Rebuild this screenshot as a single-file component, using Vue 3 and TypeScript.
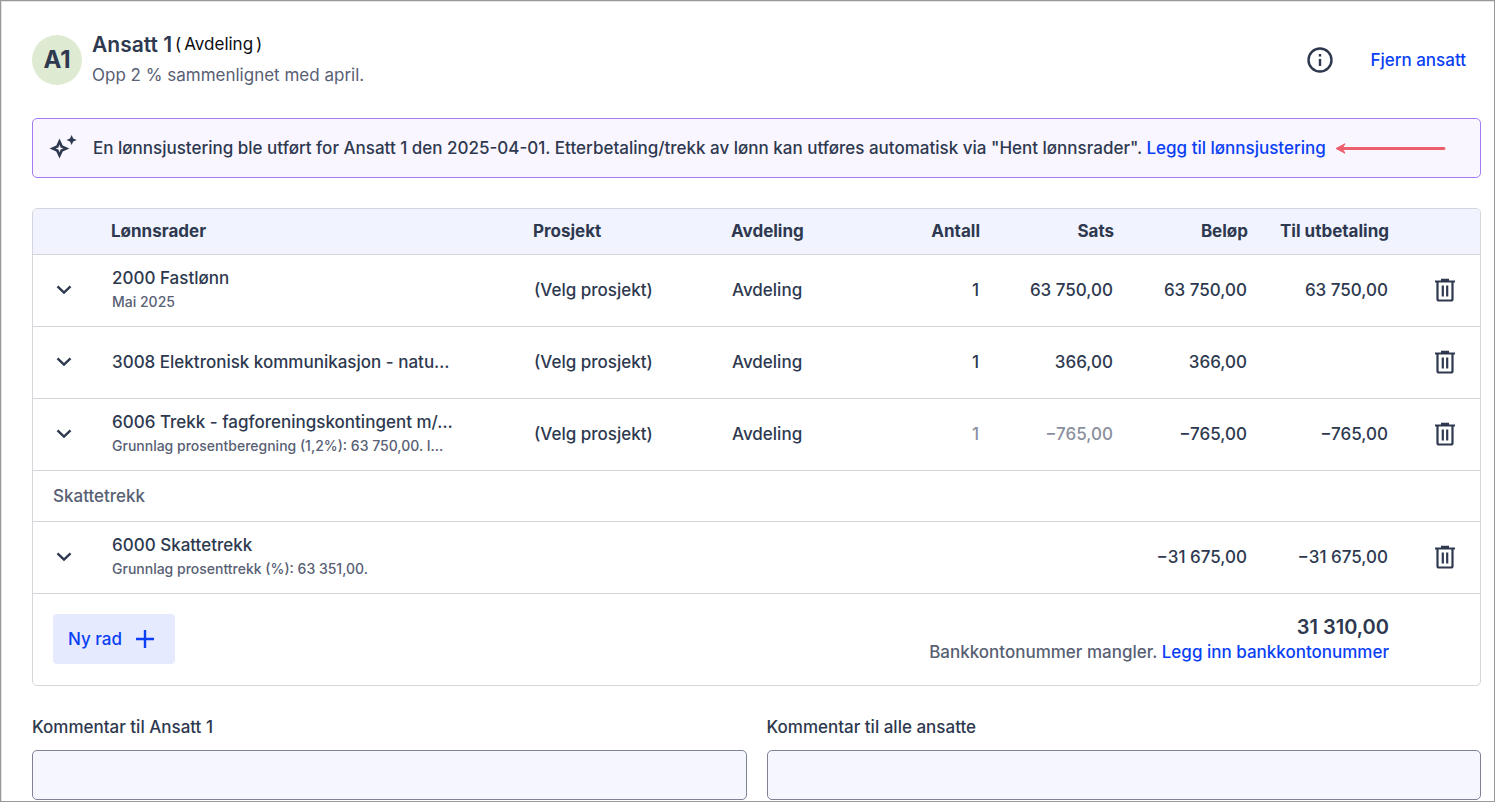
<script setup lang="ts">
import { ref } from 'vue'

interface PayRow {
  id: number
  title: string
  note?: string
  project?: string
  department?: string
  count?: string
  rate?: string
  amount: string
  payout: string
  locked?: boolean
}

const rows: PayRow[] = [
  { id: 1, title: '2000 Fastlønn', note: 'Mai 2025', project: '(Velg prosjekt)', department: 'Avdeling', count: '1', rate: '63 750,00', amount: '63 750,00', payout: '63 750,00' },
  { id: 2, title: '3008 Elektronisk kommunikasjon - natu…', project: '(Velg prosjekt)', department: 'Avdeling', count: '1', rate: '366,00', amount: '366,00', payout: '' },
  { id: 3, title: '6006 Trekk - fagforeningskontingent m/…', note: 'Grunnlag prosentberegning (1,2%): 63 750,00. I…', project: '(Velg prosjekt)', department: 'Avdeling', count: '1', rate: '−765,00', amount: '−765,00', payout: '−765,00', locked: true },
]
const taxRows: PayRow[] = [
  { id: 4, title: '6000 Skattetrekk', note: 'Grunnlag prosenttrekk (%): 63 351,00.', amount: '−31 675,00', payout: '−31 675,00' },
]
const groups = [
  { label: '', rows },
  { label: 'Skattetrekk', rows: taxRows },
]
const employeeComment = ref('')
const sharedComment = ref('')
</script>

<template>
  <main class="page">
    <header class="head">
      <div class="avatar">A1</div>
      <div class="who">
        <div class="who-line"><h1>Ansatt 1</h1><span class="dept"><span>(</span><span>Avdeling</span><span>)</span></span></div>
        <p class="trend">Opp 2 % sammenlignet med april.</p>
      </div>
      <button class="icon-btn" type="button" aria-label="Informasjon">
        <svg width="28" height="28" viewBox="0 0 28 28" fill="none">
          <circle cx="14" cy="14" r="11.5" stroke="currentColor" stroke-width="2.4" />
          <path d="M14 13v7M14 8v2.400" stroke="currentColor" stroke-width="2.4" />
        </svg>
      </button>
      <a class="remove" href="#">Fjern ansatt</a>
    </header>

    <section class="banner">
      <svg class="spark" width="28" height="28" viewBox="0 0 28 28" aria-hidden="true">
        <path fill="currentColor" fill-rule="evenodd" d="M10.500 4.500 13.700 11.400 20.400 14.500 13.700 17.600 10.500 24.500 7.300 17.600 0.600 14.500 7.300 11.400ZM10.500 10.500 9.400 13.400 6.600 14.500 9.400 15.600 10.500 18.500 11.600 15.600 14.400 14.500 11.600 13.400Z" />
        <path fill="currentColor" d="m22.600 0.900 1.600 3.500 3.500 1.600-3.500 1.600-1.600 3.500-1.600-3.500-3.500-1.600 3.500-1.600Z" />
      </svg>
      <p>En lønnsjustering ble utført for Ansatt 1 den 2025-04-01. Etterbetaling/trekk av lønn kan utføres automatisk via "Hent lønnsrader". <a href="#">Legg til lønnsjustering</a></p>
      <svg class="arrow" width="112" height="12" viewBox="0 0 112 12" fill="none" aria-hidden="true">
        <path d="M5 6.500h105" stroke="currentColor" stroke-width="2.800" stroke-linecap="round" />
        <path d="M11 1.800 2 6.500l9 4.700L8 6.500Z" fill="currentColor" stroke="currentColor" stroke-linejoin="round" />
      </svg>
    </section>

    <section class="card">
      <table>
        <colgroup>
          <col class="c-toggle" /><col class="c-title" /><col class="c-project" /><col class="c-dept" />
          <col class="c-count" /><col class="c-rate" /><col class="c-amount" /><col class="c-payout" /><col class="c-del" />
        </colgroup>
        <thead>
          <tr>
            <td></td>
            <th scope="col">Lønnsrader</th>
            <th scope="col">Prosjekt</th>
            <th scope="col">Avdeling</th>
            <th scope="col" class="num">Antall</th>
            <th scope="col" class="num">Sats</th>
            <th scope="col" class="num">Beløp</th>
            <th scope="col" class="num">Til utbetaling</th>
            <td></td>
          </tr>
        </thead>
        <tbody v-for="group in groups" :key="group.label">
          <tr v-if="group.label" class="group">
            <th scope="rowgroup" colspan="9">{{ group.label }}</th>
          </tr>
          <tr v-for="row in group.rows" :key="row.id" class="row">
            <td class="toggle">
              <button class="icon-btn" type="button" :aria-label="'Vis ' + row.title">
                <svg width="16" height="10" viewBox="0 0 16 10" fill="none">
                  <path d="m1.500 1.300 6.500 6.300 6.500-6.300" stroke="currentColor" stroke-width="2.400" />
                </svg>
              </button>
            </td>
            <td>
              <div class="title">{{ row.title }}</div>
              <div v-if="row.note" class="note">{{ row.note }}</div>
            </td>
            <td>{{ row.project }}</td>
            <td>{{ row.department }}</td>
            <td class="num" :class="{ locked: row.locked }">{{ row.count }}</td>
            <td class="num" :class="{ locked: row.locked }">{{ row.rate }}</td>
            <td class="num">{{ row.amount }}</td>
            <td class="num">{{ row.payout }}</td>
            <td class="del">
              <button class="icon-btn" type="button" :aria-label="'Slett ' + row.title">
                <svg width="20" height="24" viewBox="0 0 20 24" fill="none">
                  <path d="M0 3.500h20M6 1.800h8" stroke="currentColor" stroke-width="2.200" />
                  <path d="M2.500 3v18q0 1.500 1.500 1.500h12q1.500 0 1.500-1.500V3M7.800 7.500v11M12.200 7.500v11" stroke="currentColor" stroke-width="2.200" />
                </svg>
              </button>
            </td>
          </tr>
        </tbody>
      </table>
      <footer class="foot">
        <button class="add" type="button">
          Ny rad
          <svg width="20" height="20" viewBox="0 0 20 20" fill="none" aria-hidden="true">
            <path d="M10 1v18M1 10h18" stroke="currentColor" stroke-width="2.400" />
          </svg>
        </button>
        <div class="sum">
          <strong>31 310,00</strong>
          <p>Bankkontonummer mangler. <a href="#">Legg inn bankkontonummer</a></p>
        </div>
      </footer>
    </section>

    <form class="comments" @submit.prevent>
      <div class="field">
        <label for="c1">Kommentar til Ansatt 1</label>
        <input id="c1" v-model="employeeComment" type="text" />
      </div>
      <div class="field">
        <label for="c2">Kommentar til alle ansatte</label>
        <input id="c2" v-model="sharedComment" type="text" />
      </div>
    </form>
  </main>
</template>

<style>
body { margin: 0; background: #fff; }
</style>

<style scoped>
.page {
  box-sizing: border-box;
  min-height: 100vh;
  padding: 34px 13px 0 31px;
  border: 1px solid #999;
  box-shadow: inset 1px 1px #e4e4e4;
  color: #2e394f;
  font: 500 17px/24px Inter, Roboto, sans-serif;
}
h1, p { margin: 0; }
a { color: #0a3ff5; text-decoration: none; }
.icon-btn {
  display: inline-flex;
  padding: 0;
  border: 0;
  background: none;
  color: inherit;
}
.head { display: flex; align-items: center; height: 50px; padding-right: 15px; }
.avatar {
  display: grid;
  place-items: center;
  width: 50px;
  height: 50px;
  margin-right: 10px;
  border-radius: 50%;
  background: #deebd2;
  font-size: 24px;
  font-weight: 700;
}
.who { flex: 1; }
.who-line { display: flex; align-items: flex-start; gap: 3px; height: 30px; }
h1 { font-size: 21px; line-height: 24px; font-weight: 600; }
.dept { display: flex; gap: 3px; line-height: 22px; font-weight: 400; color: #0b0d12; }
.trend { color: #586074; font-weight: 400; }
.remove { margin-left: 36px; }
.banner {
  display: flex;
  align-items: center;
  box-sizing: border-box;
  height: 60px;
  margin-top: 33px;
  padding: 0 16px;
  border: 1px solid #a57bf5;
  border-radius: 5px;
  background: #f9f6ff;
}
.spark { margin-right: 16px; }
.arrow { margin-left: 8px; color: #ec5f6d; }
.card {
  margin-top: 30px;
  border: 1px solid #d4d6dc;
  border-radius: 5px;
  overflow: hidden;
}
table { width: 100%; border-collapse: collapse; table-layout: fixed; }
.c-toggle { width: 78px; }
.c-project { width: 198px; }
.c-dept { width: 172px; }
.c-count { width: 77px; }
.c-rate { width: 134px; }
.c-amount { width: 134px; }
.c-payout { width: 141px; }
.c-del { width: 91px; }
th, td { padding: 0; text-align: left; font-weight: 500; }
thead tr { height: 45px; background: #f1f3ff; }
thead th { font-weight: 700; }
tbody tr { height: 72px; border-top: 1px solid #d4d6dc; }
tbody td { padding: 0 1px; }
tbody .group { height: 51px; }
.group th { padding-left: 20px; color: #586074; }
th.num, td.num { text-align: right; }
.locked { color: #8a909d; }
td.toggle { padding-left: 23px; }
td.del { padding-left: 46px; }
.toggle .icon-btn, .del .icon-btn { display: flex; }
.title, .note { white-space: nowrap; }
.note { color: #586074; font-size: 14px; }
.foot {
  display: flex;
  justify-content: space-between;
  align-items: flex-start;
  padding: 20px 91px 21px 20px;
  border-top: 1px solid #d4d6dc;
}
.add {
  display: flex;
  align-items: center;
  gap: 13px;
  height: 50px;
  padding: 0 20px 0 15px;
  border: 0;
  border-radius: 4px;
  background: #e6eaff;
  color: #0a3ff5;
  font: inherit;
}
.sum { text-align: right; color: #586074; }
.sum strong { display: block; color: #2e394f; font-size: 20px; line-height: 26px; font-weight: 600; }
.comments { display: grid; grid-template-columns: 1fr 1fr; gap: 20px; margin-top: 29px; }
.field { display: grid; gap: 11px; }
input {
  box-sizing: border-box;
  width: 100%;
  height: 50px;
  padding: 0 12px;
  border: 1px solid #7e8294;
  border-radius: 5px;
  background: #f6f7fe;
  color: inherit;
  font: inherit;
}
</style>
